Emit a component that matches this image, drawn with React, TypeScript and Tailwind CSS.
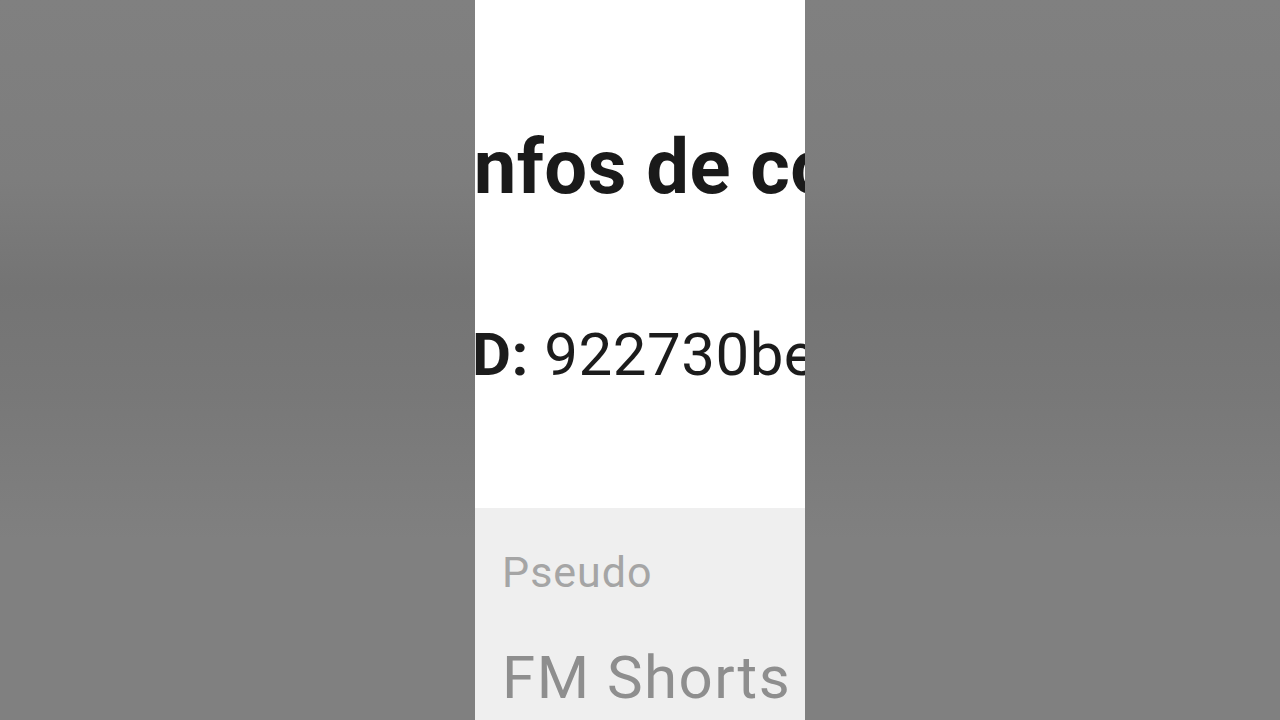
export default function App() {
    return (
        <div className="flex h-screen w-full justify-center overflow-hidden bg-[linear-gradient(180deg,#808080_0%,#7d7d7d_25%,#747474_40%,#787878_55%,#808080_75%,#808080_100%)] font-['Roboto',sans-serif]">
            <div className="flex h-full w-[330px] flex-col overflow-hidden bg-white">
                {/* account info header, clipped by the narrow panel */}
                <div className="h-[508px] shrink-0 overflow-hidden">
                    <h1 className="ml-[-24px] mt-[129px] whitespace-nowrap text-[76px] font-bold leading-none tracking-[0.4px] text-[#1a1a1a]">
                        Infos de compte
                    </h1>
                    <p className="ml-[-21px] mt-[120px] whitespace-nowrap text-[60px] leading-none tracking-[0.5px] text-[#1c1c1c]">
                        <span className="font-bold">ID:</span> 922730be4f1a
                    </p>
                </div>

                <div className="flex-1 overflow-hidden bg-[#efefef] pl-[27px] pt-[43px]">
                    <p className="whitespace-nowrap text-[43px] leading-none tracking-[1px] text-[#a5a5a5]">Pseudo</p>
                    <p className="mt-[54px] whitespace-nowrap text-[60px] leading-none tracking-[1.5px] text-[#8e8e8e]">FM Shorts</p>
                </div>
            </div>
        </div>
    )
}
